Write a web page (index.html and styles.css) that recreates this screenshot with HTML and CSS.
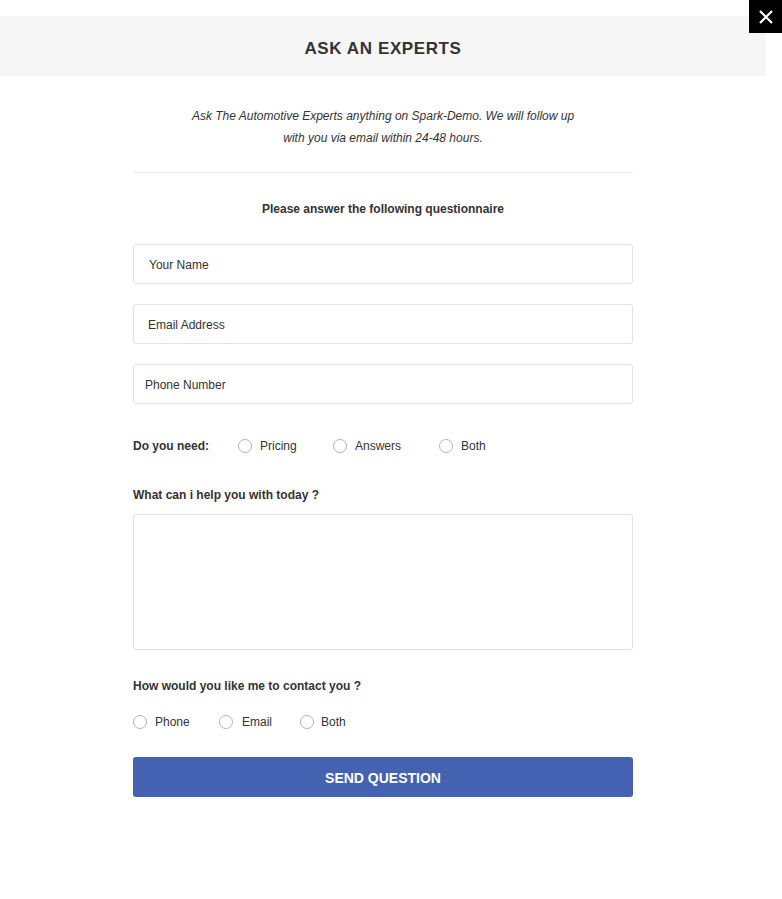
FILE: index.html
```html
<!DOCTYPE html>
<html>
<head>
<meta charset="utf-8">
<link rel="stylesheet" href="styles.css">
</head>
<body>
<div class="modal">
  <button class="close" aria-label="Close">
    <svg width="14" height="14" viewBox="0 0 14 14"><path d="M1 1L13 13M13 1L1 13" stroke="#fff" stroke-width="2.2" fill="none"/></svg>
  </button>
  <div class="header"><h1>ASK AN EXPERTS</h1></div>
  <div class="body">
    <p class="intro">Ask The Automotive Experts anything on Spark-Demo. We will follow up<br>with you via email within 24-48 hours.</p>
    <hr class="divider">
    <p class="subtitle">Please answer the following questionnaire</p>
    <form class="form">
      <div class="field pad16">Your Name</div>
      <div class="field pad15">Email Address</div>
      <div class="field pad12">Phone Number</div>
      <div class="need">
        <span class="label">Do you need:</span>
        <label class="radio r1"><span class="dot"></span>Pricing</label>
        <label class="radio r2"><span class="dot"></span>Answers</label>
        <label class="radio"><span class="dot"></span>Both</label>
      </div>
      <div class="label help">What can i help you with today ?</div>
      <div class="textarea"></div>
      <div class="label contact">How would you like me to contact you ?</div>
      <div class="contact-opts">
        <label class="radio c1"><span class="dot"></span>Phone</label>
        <label class="radio c2"><span class="dot"></span>Email</label>
        <label class="radio c3"><span class="dot"></span>Both</label>
      </div>
      <div class="send">SEND QUESTION</div>
    </form>
  </div>
</div>
</body>
</html>
```
FILE: styles.css
```css
html, body { margin: 0; padding: 0; background: #fff; }
body { font-family: "Liberation Sans", Arial, sans-serif; color: #333; }
.modal { width: 766px; padding-top: 16px; position: relative; }
.close {
  position: absolute; top: 0; left: 749px; width: 33px; height: 33px;
  background: #000; border: 0; padding: 0; display: flex; align-items: center; justify-content: center;
}
.header { background: #f6f6f6; height: 60px; display: flex; align-items: center; justify-content: center; }
.header h1 { margin: 0; font-size: 17px; font-weight: bold; color: #333; letter-spacing: 0.6px; position: relative; top: 3px; }
.body { width: 500px; margin: 0 0 0 133px; }
.intro { margin: 29px 0 0; text-align: center; font-style: italic; font-size: 12px; line-height: 22px; color: #333; }
.divider { border: 0; border-top: 1px solid #eaeaea; margin: 23px 0 0; }
.subtitle { margin: 29px 0 0; text-align: center; font-weight: bold; font-size: 12px; line-height: 14px; }
.form { margin-top: 28px; display: flex; flex-direction: column; }
.field {
  height: 38px; border: 1px solid #e2e2e2; border-radius: 3px; font-size: 12px; line-height: 40px; color: #333;
  margin-bottom: 20px; overflow: hidden;
}
.pad16 { padding-left: 15px; }
.pad15 { padding-left: 14px; }
.pad12 { padding-left: 11px; }
.need { display: flex; align-items: center; margin-top: 10px; height: 24px; }
.label { font-weight: bold; font-size: 12px; color: #333; }
.need .label { width: 105px; }
.radio { display: flex; align-items: center; font-size: 12px; color: #333; }
.dot { width: 12px; height: 12px; border: 1px solid #b5b5b5; border-radius: 50%; margin-right: 8px; display: inline-block; }
.r1 { width: 95px; }
.r2 { width: 106px; }
.help { margin-top: 30px; line-height: 14px; }
.textarea { height: 134px; border: 1px solid #e2e2e2; border-radius: 3px; margin-top: 12px; }
.contact { margin-top: 29px; line-height: 14px; }
.contact-opts { display: flex; align-items: center; margin-top: 22px; height: 14px; }
.c1 { width: 86px; }
.c2 { width: 81px; }
.c2 .dot { margin-right: 9px; }
.c3 .dot { margin-right: 7px; }
.send {
  margin-top: 28px; height: 40px; box-sizing: border-box; padding-top: 2px; background: #4462b1; border-radius: 3px; color: #fff; font-weight: bold;
  font-size: 14px; display: flex; align-items: center; justify-content: center;
}
```
